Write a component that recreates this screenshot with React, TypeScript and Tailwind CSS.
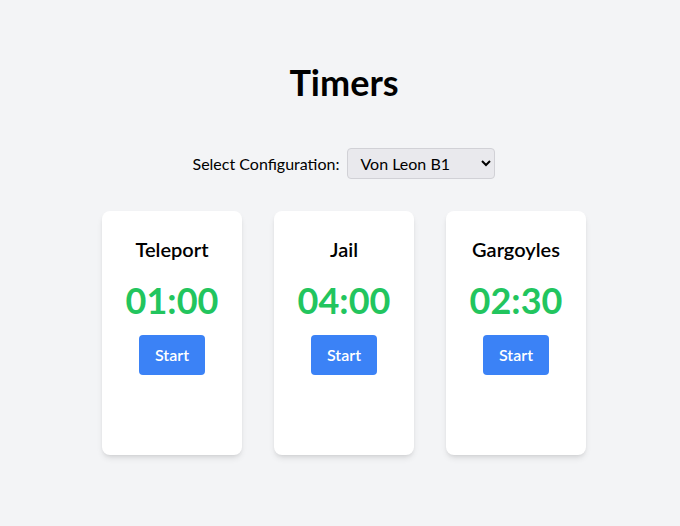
import { useState } from 'react';

const configs: Record<string, { name: string; seconds: number }[]> = {
    'Von Leon B1': [
        { name: 'Teleport', seconds: 60 },
        { name: 'Jail', seconds: 240 },
        { name: 'Gargoyles', seconds: 150 },
    ],
};

function format(seconds: number) {
    const m = Math.floor(seconds / 60).toString().padStart(2, '0');
    const s = (seconds % 60).toString().padStart(2, '0');
    return `${m}:${s}`;
}

export default function App() {
    const [config, setConfig] = useState('Von Leon B1');
    const timers = configs[config];

    return (
        <div className="min-h-[526px] bg-gray-100 font-['Lato',sans-serif] text-black pt-[58px] pl-[8px]">
            <h1 className="text-4xl font-bold text-center leading-[48px]">Timers</h1>

            {/* Config select */}
            <div className="flex items-center justify-center gap-2 mt-[42px]">
                <label className="text-base">Select Configuration:</label>
                <select
                    value={config}
                    onChange={(e) => setConfig(e.target.value)}
                    className="w-[148px] h-[31px] px-2 bg-[#e9e9ed] border border-[#d1d1d6] rounded text-base"
                >
                    {Object.keys(configs).map((c) => (
                        <option key={c}>{c}</option>
                    ))}
                </select>
            </div>

            {/* Timer cards */}
            <div className="flex justify-center gap-8 mt-[32px]">
                {timers.map((t) => (
                    <div key={t.name} className="w-[140px] h-[244px] bg-white rounded-lg shadow-md p-6 flex flex-col items-center">
                        <h2 className="text-xl font-semibold">{t.name}</h2>
                        <div className="text-4xl font-bold text-[#22c55e] mt-[17px]">{format(t.seconds)}</div>
                        <button className="mt-[15px] px-4 py-2 bg-[#3b82f6] text-white font-semibold rounded">Start</button>
                    </div>
                ))}
            </div>
        </div>
    );
}
